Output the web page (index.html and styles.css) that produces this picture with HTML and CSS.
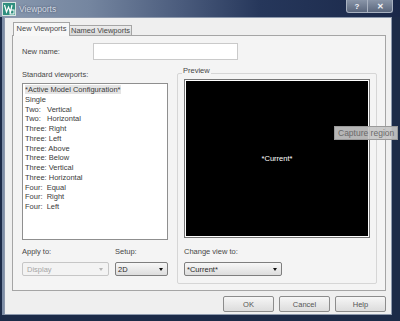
FILE: index.html
```html
<!DOCTYPE html>
<html lang="en">
  <head>
    <meta charset="UTF-8" />
    <title>Viewports</title>
    <link rel="stylesheet" href="styles.css">
  </head>
  <body>
    <div class="window">
      <div class="titlebar">
        <svg class="app-icon" viewBox="0 0 14 14" aria-hidden="true">
          <rect x="0.5" y="0.5" width="13" height="13" fill="#2f8f7e" stroke="#d8e6e2" />
          <polyline points="2.5,3 4.5,10 6.5,5 8.5,10 10,3" fill="none" stroke="#ffffff" stroke-width="1.2" />
          <rect x="8" y="8" width="4" height="4" fill="none" stroke="#ffffff" stroke-width="1" />
        </svg>
        <span class="title">Viewports</span>
        <div class="caption-btns">
          <span class="cap-btn help">?</span>
          <span class="cap-btn close">✕</span>
        </div>
      </div>

      <div class="client">
        <div class="tabs">
          <div class="tab active">New Viewports</div>
          <div class="tab">Named Viewports</div>
        </div>

        <div class="panel">
          <div class="name-row">
            <label class="name-label">New name:</label>
            <div class="textbox"></div>
          </div>

          <div class="columns">
            <div class="left-col">
              <div class="label list-label">Standard viewports:</div>
              <ul class="listbox">
                <li><span class="selected">*Active Model Configuration*</span></li>
                <li>Single</li>
                <li>Two:   Vertical</li>
                <li>Two:   Horizontal</li>
                <li>Three: Right</li>
                <li>Three: Left</li>
                <li>Three: Above</li>
                <li>Three: Below</li>
                <li>Three: Vertical</li>
                <li>Three: Horizontal</li>
                <li>Four:  Equal</li>
                <li>Four:  Right</li>
                <li>Four:  Left</li>
              </ul>
              <div class="combo-row">
                <div>
                  <div class="label field-label">Apply to:</div>
                  <div class="combo disabled">Display<i class="arrow"></i></div>
                </div>
                <div>
                  <div class="label field-label">Setup:</div>
                  <div class="combo">2D<i class="arrow"></i></div>
                </div>
              </div>
            </div>

            <div class="group">
              <div class="group-label">Preview</div>
              <div class="preview">*Current*</div>
              <div class="label field-label change-label">Change view to:</div>
              <div class="combo view-combo">*Current*<i class="arrow"></i></div>
            </div>
          </div>
        </div>

        <div class="buttons">
          <button class="btn">OK</button>
          <button class="btn">Cancel</button>
          <button class="btn">Help</button>
        </div>
      </div>

      <div class="tooltip">Capture region</div>
    </div>
  </body>
</html>
```

FILE: styles.css
```css
* {
  margin: 0;
  padding: 0;
  box-sizing: border-box;
}

body {
  width: 400px;
  height: 321px;
  overflow: hidden;
  background: #1c2b48;
  font-family: "Liberation Sans", Arial, sans-serif;
  font-size: 7.5px;
  color: #474747;
}

.window {
  position: relative;
  height: 321px;
  display: flex;
  flex-direction: column;
}

/* title bar */
.titlebar {
  flex: none;
  height: 17px;
  display: flex;
  align-items: flex-start;
  padding-left: 2px;
  background: linear-gradient(to right, #8898ae 0%, #7586a0 22%, #4b5c7d 45%, #26375b 65%, #1a2849 100%);
}

.app-icon {
  width: 14px;
  height: 14px;
  margin-top: 2px;
}

.title {
  margin: 4px 0 0 3px;
  font-size: 8.5px;
  line-height: 10px;
  color: #d6dce6;
  text-shadow: 0 0 2px rgba(30, 40, 60, 0.7);
}

.caption-btns {
  margin-left: auto;
  margin-right: 7px;
  display: flex;
  height: 13px;
  border: 1px solid #a9b2c1;
  border-top: none;
  border-radius: 0 0 3px 3px;
  background: linear-gradient(#8995a8, #5b677d);
}

.cap-btn {
  display: flex;
  justify-content: center;
  align-items: center;
  color: #f2f4f8;
  font-weight: bold;
  font-size: 8px;
}

.cap-btn.help {
  width: 21px;
  border-right: 1px solid #a9b2c1;
}

.cap-btn.close {
  width: 24px;
}

/* dialog body */
.client {
  flex: 1;
  margin: 0 8px 6px 4px;
  padding: 4px 5px 0 7px;
  border: 1px solid #8d99ad;
  background: #efefef;
  box-shadow: -2px 0 0 #7d8da6;
}

.tabs {
  display: flex;
  align-items: flex-end;
  height: 13px;
  padding-left: 1px;
  position: relative;
  z-index: 1;
}

.tab {
  height: 10px;
  width: 63px;
  margin-left: -1px;
  border: 1px solid #a5a5a5;
  border-bottom: none;
  background: linear-gradient(#ececec, #dadada);
  text-align: center;
  line-height: 9px;
}

.tab.active {
  width: 57px;
  height: 14px;
  margin-left: 0;
  margin-bottom: -1px;
  background: #f7f7f7;
  line-height: 12px;
  position: relative;
  z-index: 1;
}

.panel {
  height: 256px;
  border: 1px solid #a5a5a5;
  background: #f4f4f4;
}

.name-row {
  display: flex;
  align-items: center;
  margin: 7px 0 0 9px;
}

.name-label {
  width: 71px;
}

.textbox {
  width: 145px;
  height: 17px;
  border: 1px solid #cacaca;
  background: #fff;
}

.columns {
  display: flex;
  align-items: flex-start;
  gap: 9px;
  padding-left: 9px;
}

.label {
  line-height: 9px;
}

.left-col {
  width: 146px;
  margin-top: 10px;
}

.list-label {
  margin-bottom: 4px;
}

.listbox {
  list-style: none;
  height: 157px;
  padding: 1px 0 0 2px;
  border: 1px solid #8f8f8f;
  background: #fff;
  color: #3a3a3a;
}

.listbox li {
  line-height: 9.75px;
  white-space: pre;
}

.selected {
  padding-right: 1px;
  background: #e4e4e4;
}

.combo-row {
  display: grid;
  grid-template-columns: 87px 53px;
  column-gap: 6px;
  margin-top: 7px;
}

.field-label {
  margin-bottom: 6px;
}

.combo {
  display: flex;
  align-items: center;
  justify-content: space-between;
  height: 14px;
  padding: 0 4px 0 2px;
  border: 1px solid #7e7e7e;
  border-radius: 2px;
  background: linear-gradient(#f7f7f7, #dddddd);
  color: #2a2a2a;
}

.combo.disabled {
  padding-left: 4px;
  padding-right: 5px;
  border-color: #c6c6c6;
  background: #f3f3f3;
  color: #a6a6a6;
}

.arrow {
  border-left: 2.5px solid transparent;
  border-right: 2.5px solid transparent;
  border-top: 3px solid #111;
}

.disabled .arrow {
  border-top-color: #b4b4b4;
}

/* preview group */
.group {
  width: 200px;
  margin-top: 13px;
  padding: 0 0 7px 6px;
  border: 1px solid #d6d6d6;
  border-radius: 2px;
}

.group-label {
  width: fit-content;
  margin: -8px 0 0 -2px;
  padding: 0 1px;
  line-height: 9px;
  background: #f4f4f4;
}

.preview {
  width: 186px;
  height: 159px;
  margin-top: 4px;
  display: flex;
  justify-content: center;
  align-items: center;
  border: 1px solid #767676;
  box-shadow: inset 0 0 0 1px #fff;
  background: #000;
  color: #fff;
}

.change-label {
  margin-top: 9px;
}

.view-combo {
  width: 98px;
}

/* bottom buttons */
.buttons {
  display: flex;
  justify-content: flex-end;
  gap: 5px;
  margin-top: 5px;
}

.btn {
  width: 51px;
  height: 16px;
  border: 1px solid #8c8c8c;
  border-radius: 2px;
  background: linear-gradient(#f6f6f6, #dcdcdc);
  font: inherit;
  color: #555;
}

/* hover tooltip */
.tooltip {
  position: absolute;
  left: 334px;
  top: 126px;
  width: 64px;
  height: 14px;
  padding-left: 3px;
  border: 1px solid #9a9a9a;
  background: rgba(198, 198, 198, 0.92);
  font-size: 8.5px;
  line-height: 12px;
  color: #6a6a6a;
  white-space: nowrap;
}
```
